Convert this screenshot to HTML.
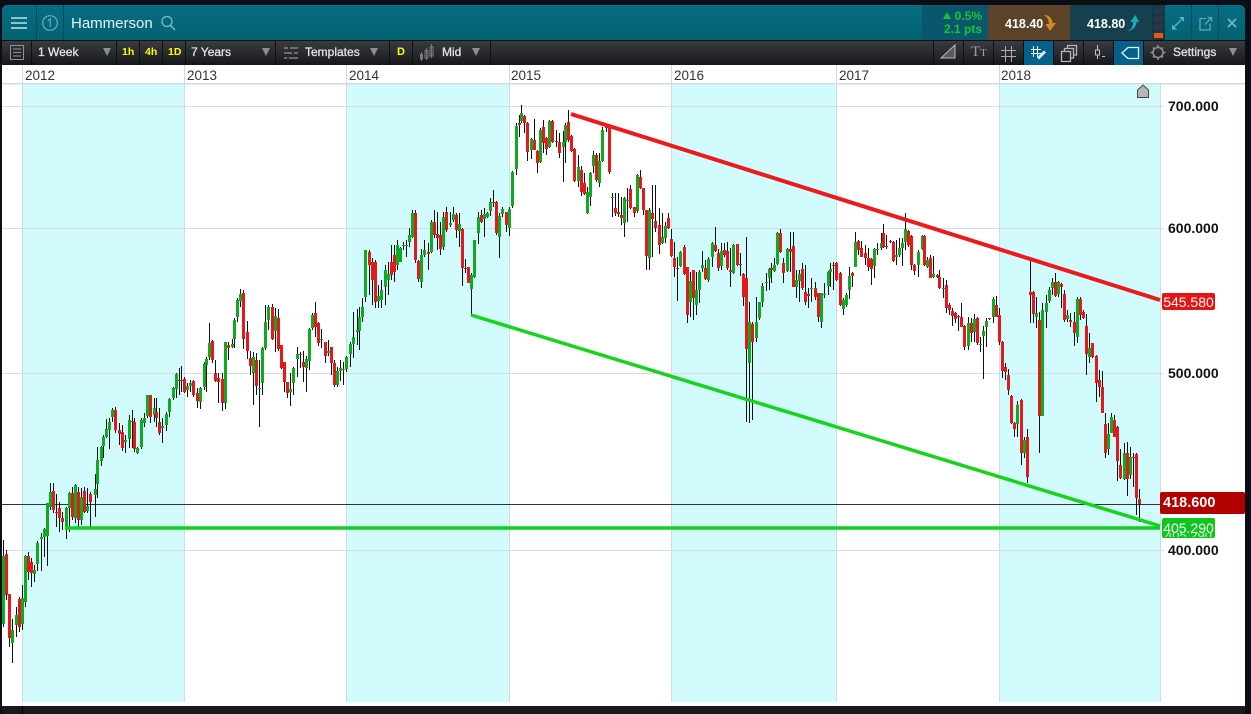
<!DOCTYPE html>
<html><head><meta charset="utf-8"><title>Hammerson</title>
<style>
html,body{margin:0;padding:0;width:1251px;height:714px;overflow:hidden;background:#0b0f15;font-family:"Liberation Sans",sans-serif}
.a{position:absolute}
#hd{left:2px;top:5px;width:1243px;height:35px;border-radius:5px 5px 0 0;background:linear-gradient(#066d85,#04626f);overflow:hidden}
#tb{left:2px;top:41px;width:1243px;height:24px;background:linear-gradient(#393c41,#16181c)}
#ch{left:2px;top:65px;width:1243px;height:641px;background:#fff}
.t{position:absolute;white-space:nowrap;color:#dfe3e6;font-size:12px;-webkit-text-stroke:.3px #dfe3e6;line-height:24px;top:39.500px}
.y{position:absolute;white-space:nowrap;color:#ff0;font-size:10.5px;font-weight:bold;line-height:24px;top:39.500px}
.s{position:absolute;top:41px;width:1px;height:24px;background:#0d0f12}
.ar{position:absolute;top:47.500px;width:0;height:0;border-left:4.5px solid transparent;border-right:4.5px solid transparent;border-top:8px solid #8b9096}
.yr{position:absolute;top:68px;font-size:13.5px;line-height:16px;color:#333;white-space:nowrap}
.p{position:absolute;left:1168px;font-size:14px;font-weight:bold;color:#111;line-height:16px;white-space:nowrap}
.tag{position:absolute;color:#fff;text-align:center;white-space:nowrap;border-radius:2px}
</style></head><body>
<div class="a" id="hd"></div>
<div class="a" style="left:922px;top:5px;width:66px;height:35px;background:#0a566c"></div>
<div class="a" style="left:988px;top:5px;width:82px;height:35px;background:#5a4329"></div>
<div class="a" style="left:1070px;top:5px;width:82px;height:35px;background:#15404e"></div>
<div class="a" style="left:1152px;top:5px;width:13px;height:35px;background:#0f3a48"></div>
<div class="a" style="left:1154px;top:8px;width:9px;height:6px;background:#2f3546"></div>
<div class="a" style="left:1154px;top:16px;width:9px;height:6px;background:#2f3546"></div>
<div class="a" style="left:1154px;top:24px;width:9px;height:6px;background:#2f3546"></div>
<div class="a" style="left:1154px;top:33px;width:9px;height:5px;background:#f0540c"></div>
<div class="a" style="left:1191px;top:5px;width:1px;height:35px;background:#04485a"></div>
<div class="a" style="left:1218px;top:5px;width:1px;height:35px;background:#04485a"></div>
<div class="a" style="left:36px;top:5px;width:1px;height:35px;background:#04485a"></div>
<div class="a" style="left:63px;top:5px;width:1px;height:35px;background:#04485a"></div>
<svg class="a" style="left:0;top:0" width="1251" height="41" fill="none">
<path d="M11 18H27M11 23H27M11 28H27" stroke="#8cc4d0" stroke-width="2"/>
<circle cx="50" cy="23" r="7.3" stroke="#5fb0c0" stroke-width="1.2"/>
<path d="M48 20.500L50.300 19V27" stroke="#5fb0c0" stroke-width="1.200"/>
<circle cx="167" cy="21.500" r="5" stroke="#7fbccb" stroke-width="1.300"/>
<path d="M170.500 25.500L175 30" stroke="#7fbccb" stroke-width="1.500"/>
<path d="M1044 15C1049 15 1052 18 1052.500 23L1056 23L1050 31L1045.500 24L1049 24C1049 20 1047 17 1044 15Z" fill="#d98a1e"/>
<path d="M1127 31C1131 30 1133 27 1133 22L1130 22L1135.500 15L1139 22L1136.500 22C1136.500 27 1132 31 1127 31Z" fill="#1ea6bd"/>
<path d="M1184 17H1179L1184 22ZM1172 29.500H1177L1172 24.500Z" fill="#5fb4c8"/>
<path d="M1181 20L1177.500 23.500M1178 23L1174.500 26.500" stroke="#5fb4c8" stroke-width="1.300"/>
<path d="M1206 18.500H1200V30H1210V23.500M1205 24.500L1211 18M1207.500 17.500H1211.500V21.500" stroke="#5fa9bb" stroke-width="1.300"/>
<path d="M1228 19L1236 27M1236 19L1228 27" stroke="#6fb5c6" stroke-width="1.800"/>
</svg>
<div class="a" style="left:71px;top:15px;font-size:15px;line-height:18px;color:#e6f3f6;white-space:nowrap">Hammerson</div>
<svg class="a" style="left:943px;top:11px" width="9" height="9"><path d="M0 8L4 1L8 8Z" fill="#10c832"/></svg>
<div class="a" style="left:936px;top:9px;width:46px;text-align:right;font-size:12px;font-weight:bold;line-height:14px;color:#10c832;white-space:nowrap">0.5%</div>
<div class="a" style="left:936px;top:23px;width:46px;text-align:right;font-size:12px;font-weight:bold;line-height:13px;color:#10c832;white-space:nowrap">2.1 pts</div>
<div class="a" style="left:1005px;top:16px;font-size:12.500px;font-weight:bold;line-height:16px;color:#fff">418.40</div>
<div class="a" style="left:1087px;top:16px;font-size:12.500px;font-weight:bold;line-height:16px;color:#fff">418.80</div>

<div class="a" id="tb"></div>
<div class="a" style="left:1024px;top:41px;width:29px;height:24px;background:#05608c"></div>
<div class="a" style="left:1114px;top:41px;width:29px;height:24px;background:#05608c"></div>
<div class="s" style="left:31px"></div><div class="s" style="left:116px"></div><div class="s" style="left:139px"></div><div class="s" style="left:162px"></div><div class="s" style="left:185px"></div><div class="s" style="left:275px"></div><div class="s" style="left:389px"></div><div class="s" style="left:412px"></div><div class="s" style="left:490px"></div><div class="s" style="left:933px"></div><div class="s" style="left:963px"></div><div class="s" style="left:993px"></div><div class="s" style="left:1023px"></div><div class="s" style="left:1053px"></div><div class="s" style="left:1083px"></div><div class="s" style="left:1113px"></div><div class="s" style="left:1143px"></div>
<svg class="a" style="left:0;top:41px" width="1251" height="24" fill="none" stroke="#8c9096" stroke-width="1">
<path d="M10.500 4.500H23.500V18.500H10.500ZM13 8H21M13 11.500H21M13 15H21"/>
<path d="M284 7H298M284 12H298M284 17H298" stroke="#80848a" stroke-width="1.500"/>
<path d="M289 5V9M293 10V14M288 15V19" stroke="#2a2c30" stroke-width="2"/>
<path d="M420.500 13.500H422.500V18H420.500ZM421.500 11V20M425 9.500H428V17H425ZM426.500 7V19M430 6H433V15H430ZM431.500 3V17" stroke="#777b80"/>
<path d="M941 17H955V4Z" stroke="#b9bcbf" fill="#55585c"/>
<path d="M1005.500 5V21M1011.500 5V21M1001 9.500H1016M1001 15.500H1016" stroke="#a8acb0"/>
<path d="M1033.500 5V16M1037.500 5V16M1031 8.500H1041M1031 12.500H1041" stroke="#eef5f8"/>
<path d="M1038 17.500L1045 10.500" stroke="#dfeaf0" stroke-width="3"/>
<path d="M1061.500 10.500H1070.500V20.500H1061.500ZM1064.500 10V7.500H1073.500V17H1071M1067.500 7V4.500H1076.500V14H1074" stroke="#b4b8bc" stroke-width="1.300"/>
<path d="M1097.500 4V9M1097.500 14V18M1095.500 9H1099.500V14H1095.500ZM1102 15.500H1105" stroke="#c0c4c8"/>
<path d="M1122 12L1128 6.500H1138.500V17.500H1128Z" stroke="#e8f2f6" stroke-width="1.300"/>
<circle cx="1158" cy="11.500" r="5" stroke="#8e8e8a" stroke-width="1.600"/>
<path d="M1158 4V6M1158 17V19M1150.500 11.500H1152.500M1163.500 11.500H1165.500M1153 6.500L1154.500 8M1161.500 15L1163 16.500M1163 6.500L1161.500 8M1154.500 15L1153 16.500" stroke="#8e8e8a" stroke-width="1.600"/>
</svg>
<div class="t" style="left:38px">1 Week</div><div class="ar" style="left:103px"></div>
<div class="y" style="left:122px">1h</div><div class="y" style="left:145px">4h</div><div class="y" style="left:168px">1D</div>
<div class="t" style="left:191px">7 Years</div><div class="ar" style="left:262px"></div>
<div class="t" style="left:305px">Templates</div><div class="ar" style="left:370px"></div>
<div class="y" style="left:397px;font-size:11px">D</div>
<div class="t" style="left:442px">Mid</div><div class="ar" style="left:472px"></div>
<div class="t" style="left:971px;top:40px;font-family:'Liberation Serif',serif;font-size:15px;color:#9a9ea2;-webkit-text-stroke:0">T<span style="font-size:11px">T</span></div>
<div class="t" style="left:1173px">Settings</div><div class="ar" style="left:1229px"></div>

<div class="a" id="ch"></div>
<div class="a" style="left:2px;top:706px;width:1243px;height:8px;background:#17191d"></div>
<div class="a" style="left:22px;top:706px;width:1px;height:8px;background:#000"></div>
<svg class="a" id="c" style="left:0;top:0" width="1251" height="714" shape-rendering="crispEdges">
<g fill="#d2fbfd"><rect x="22" y="84" width="162" height="618"/><rect x="346" y="84" width="163" height="618"/><rect x="671" y="84" width="165" height="618"/><rect x="999" y="84" width="161" height="618"/></g>
<g fill="#cfdcdf"><rect x="2" y="83" width="1243" height="1.500"/><rect x="22" y="65" width="1" height="637"/><rect x="184" y="65" width="1" height="637"/><rect x="346" y="65" width="1" height="637"/><rect x="509" y="65" width="1" height="637"/><rect x="671" y="65" width="1" height="637"/><rect x="836" y="65" width="1" height="637"/><rect x="999" y="65" width="1" height="637"/><rect x="1160" y="84" width="1" height="618"/></g>
<g fill="#d8dcdc"><rect x="2" y="106" width="1162" height="1"/><rect x="2" y="228" width="1162" height="1"/><rect x="2" y="373" width="1162" height="1"/><rect x="2" y="550" width="1162" height="1"/></g>
<rect x="2" y="504" width="1158" height="1" fill="#333"/>
<g id="cd"></g>
<g shape-rendering="auto">
<path d="M1137.500 97.500V90L1143 85L1148.500 90V97.500Z" fill="#b4b6b8" stroke="#444" stroke-width="1"/>
<path d="M65 528H1160" stroke="#10cf1e" stroke-width="3.500"/>
<path d="M471 315L1160 526" stroke="#18d21c" stroke-width="3.500"/>
<path d="M571 114L1160 300" stroke="#ec1a1a" stroke-width="4"/>
</g>
</svg>
<div class="yr" style="left:25px">2012</div><div class="yr" style="left:187px">2013</div><div class="yr" style="left:349px">2014</div><div class="yr" style="left:511px">2015</div><div class="yr" style="left:674px">2016</div><div class="yr" style="left:839px">2017</div><div class="yr" style="left:1001px">2018</div>
<div class="p" style="top:98px">700.000</div><div class="p" style="top:220px">600.000</div><div class="p" style="top:365px">500.000</div><div class="p" style="top:542px">400.000</div>
<div class="tag" style="left:1162px;top:293px;width:53px;height:17px;background:#e31414;font-size:14px;line-height:18px">545.580</div>
<div class="tag" style="left:1160px;top:492px;width:85px;height:22px;background:#b00000;font-size:14.500px;font-weight:bold;line-height:23px;text-align:left;text-indent:3px">418.600</div>
<div class="tag" style="left:1162px;top:518px;width:53px;height:20px;background:#11c51f;font-size:14px;line-height:20px">405.290</div>
<div class="a" style="left:1165px;top:533px;width:47px;height:4px;overflow:hidden;color:#c8f5cc;font-size:13px;line-height:6px;white-space:nowrap">405.290</div>
<script>
var G=[
[0,380,3,"10 480 740 528 733 g;17 510 660 522 645 r;27 643 800 643 773 r;37 718 850 750 790 g;48 680 770 705 735 g;57 650 755 657 740 r;67 615 750 655 732 g;76 525 680 528 665 g;85 515 600 528 575 r;93 535 622 545 578 r;103 555 605 570 582 g;112 483 573 488 552 g;123 460 573 472 478 g;133 445 530 447 470 g;142 368 557 370 467 g;151 310 390 335 380 g;160 310 400 333 390 r;169 342 440 395 400 r;178 365 455 385 415 r;187 395 450 415 425 r;198 380 478 385 445 g;208 335 455 338 385 g;215 320 420 340 412 r;226 312 430 315 415 g;234 320 440 335 420 r;244 325 435 350 420 g;252 322 400 333 395 r;261 325 400 378 392 g;270 335 440 342 365 r;284 282 410 328 345 g;292 200 355 240 312 g;302 198 258 202 242 g;310 165 233 170 198 g;319 118 175 148 170 g;328 115 208 127 150 g;337 85 125 90 110 g;346 82 160 90 150 r;357 130 195 150 162 r;366 135 212 155 205 r;376 165 218 180 186 g;386 105 205 120 178 g;395 90 205 122 126 r;403 115 215 127 207 r;412 200 222 205 220 g;422 115 208 120 202 g;433 100 140 115 130 g;442 45 115 45 108 g;451 45 128 45 110 r;461 55 125 85 105 g;468 55 140 97 115 r;478 85 165 125 158 r;487 115 188 138 143 g;497 95 152 102 135 g;508 55 110 57 95 g;518 22 60 25 55 g"],
[100,280,3,"227 280 355 282 328 g;236 265 345 300 303 r;244 258 335 300 304 r;252 290 340 298 335 r;262 310 352 318 330 g;271 300 335 310 318 g;279 300 352 302 345 r;291 325 385 340 362 r;301 320 388 325 365 g;311 245 330 253 320 g;319 232 335 238 255 g;328 130 240 190 230 g;336 180 248 182 240 r;345 240 305 278 303 r;354 280 368 295 305 r;366 280 392 298 368 r;376 185 388 187 368 g;385 185 240 195 205 r;395 178 205 192 200 g;403 115 205 120 177 g;412 55 125 60 110 g;421 28 80 42 62 g;429 30 208 38 177 r;440 122 238 155 212 r;449 212 285 235 258 r;460 215 375 232 280 g;468 220 345 240 318 r;478 240 440 323 326 g;487 200 345 203 310 g;496 75 210 127 205 g;505 75 150 80 120 g;515 72 180 80 178 r;526 85 215 108 152 g;534 88 212 115 208 r;543 195 268 195 265 r;552 245 335 245 305 r;561 305 355 305 338 r;571 280 378 327 337 g;580 260 345 265 310 g;590 200 290 222 237 g;600 215 265 222 225 r;609 212 305 245 262 r;619 228 335 238 265 g;628 145 270 148 242 g;637 98 150 105 145 g;646 67 170 100 140 r;654 125 198 130 190 r;664 148 205 176 179 g;674 185 250 185 228 r;685 180 228 213 218 g;692 200 285 202 248 r;702 240 320 250 315 r;712 262 322 272 315 g;721 240 302 265 272 g;730 245 315 266 270 g;739 228 275 232 267 g;751 185 262 192 222 g;760 95 235 170 192 g;770 88 195 150 155 g;778 80 210 112 152 g;787 55 125 82 110 g"],
[0,0,1,"365.3 250 302 250 297 g;368.500 250 295 252 265 r;371.600 258 305 262 280 r;374.800 260 308 262 302 r;378 285 308 296 301 g;381 280 308 290 300 g;384.700 265 305 270 287 g;388 262 295 274 280 g;391 245 280 262 275 r;394 245 282 255 272 r;397 240 270 245 265 g"],
[400,90,3,"0 470 515 475 515 g;10 455 480 465 469 g;18 450 500 465 469 g;28 415 470 435 455 g;37 360 445 368 440 g;45 360 520 370 510 r;54 510 575 512 568 r;64 478 595 495 575 g;73 450 500 480 495 g;85 460 540 487 492 r;94 390 490 395 487 g;103 360 445 395 435 r;112 365 480 432 445 r;120 395 495 435 478 r;130 365 480 380 470 g;139 350 425 365 420 r;149 365 410 400 405 g;160 350 395 373 390 g;168 370 445 375 420 r;178 370 470 402 422 g;186 415 588 418 535 r;195 508 550 533 538 r;204 530 580 530 580 r;214 550 675 555 598 g;223 450 565 450 560 g;235 365 462 380 430 g;243 360 400 375 395 r;253 355 440 372 388 g;262 365 385 370 380 g;271 325 378 337 362 g;280 300 350 335 340 r;288 333 435 335 430 r;298 370 505 377 440 g;307 350 380 357 372 g;318 365 425 365 405 r;328 350 438 358 413 g;337 243 355 245 348 g;347 100 255 107 237 g;356 75 142 98 105 r;364 45 100 70 93 g;372 75 128 78 100 r;381 95 212 98 187 r;394 145 208 148 180 g;403 88 180 150 180 r;411 180 250 182 220 r;421 115 220 120 215 g;429 90 190 112 160 r;438 140 195 143 178 r;448 90 175 92 170 g;456 90 158 92 155 r;469 120 170 152 155 r;477 130 205 155 190 r;488 122 275 155 170 g;496 100 220 105 155 g;505 60 155 95 150 r;513 135 185 137 183 r;522 175 275 178 272 r;533 195 290 230 273 g;543 228 318 240 305 r;551 250 315 280 312 r;562 292 372 305 370 g;571 245 348 248 322 g;580 182 248 195 228 g;588 190 275 195 270 r;598 190 292 213 278 g;607 110 215 120 212 g;617 105 125 110 114 r;627 115 253 115 245 r;636 310 380 320 324 g;645 308 378 355 370 r;655 310 382 367 372 r;664 320 405 375 385 r;673 322 440 325 400 g;682 295 395 330 334 g;690 285 358 298 355 r;702 350 380 352 368 r;712 252 370 255 362 g;720 240 298 260 295 r;729 295 375 295 360 r;738 360 540 360 498 r;748 355 540 360 505 g;756 285 500 370 388 r;766 285 425 392 415 r;776 355 492 405 465 r;787 368 462 440 460 g;796 395 460 408 445 g;804 368 418 385 415 r;813 418 500 448 498 r;822 455 560 503 532 r;832 500 632 533 537 r;841 482 530 485 528 g;852 465 555 470 552 r;861 530 698 532 675 r;871 545 680 572 635 g;880 540 690 540 625 r;889 545 675 600 645 g;897 540 640 545 600 g"],
[670,200,3,"97 152 215 195 203 g;105 180 240 205 238 r;115 170 245 178 240 g;127 125 200 130 172 g;136 82 155 135 152 r;144 148 212 160 205 r;154 130 210 152 198 g;161 130 170 150 165 r;171 125 210 152 205 r;181 145 260 210 215 r;190 132 222 135 218 g;200 132 198 133 195 r;210 160 228 193 196 r;219 220 318 222 290 r;228 112 665 235 448 r;238 305 668 365 488 g;247 365 660 372 425 r;257 292 425 367 415 g;266 305 360 305 355 g;277 250 320 258 305 g;287 220 272 245 250 g;296 205 270 208 235 g;304 190 250 205 210 r;313 175 215 195 212 g;322 95 195 100 192 g;330 88 158 100 155 r;339 175 250 190 220 r;352 145 215 148 212 g;360 95 215 148 155 r;368 97 262 138 260 r;379 210 293 240 262 g;388 210 305 222 242 g;396 190 270 207 265 r;405 195 315 275 305 r;414 265 325 283 287 r;424 235 305 265 268 g;434 245 300 265 290 r;444 278 365 280 350 r;454 278 385 280 365 g;463 250 295 281 285 g;473 212 285 215 258 g;481 190 260 207 215 g;489 185 270 195 198 r;498 185 242 190 240 r;510 215 318 218 315 r;520 295 345 300 328 g;529 280 320 285 315 g;538 200 298 228 270 g;546 215 260 218 228 r;556 97 200 127 200 g;564 120 165 122 150 r;574 122 172 145 170 r;584 135 195 160 175 r;594 145 212 175 200 r;603 175 255 178 208 r;613 145 235 148 198 g;622 130 165 146 150 g;632 100 150 130 145 g;640 72 145 100 142 r;649 105 148 138 142 r;660 120 130 123 127 r;669 122 185 125 182 r;679 120 195 165 170 g;688 115 172 145 165 g;697 115 198 128 145 g;706 40 150 88 125 g;713 90 140 92 135 r;723 105 210 107 195 r;732 192 225 195 212 r;745 150 230 155 195 g;755 105 150 108 148 g;762 105 198 108 195 r;772 170 205 180 200 g;780 165 235 175 233 r;790 168 235 222 232 g;800 222 235 225 232 r;807 210 268 230 265 r;820 235 295 264 268 g;828 240 340 255 325 r;836 310 345 315 330 r;846 325 378 332 348 r;855 335 370 340 358 r;864 345 392 348 352 r;873 310 382 350 380 r;883 375 450 378 440 r"],
[950,240,3,"55 232 330 250 318 g;63 235 305 250 278 r;72 222 305 238 275 g;81 232 315 235 310 r;91 290 335 312 316 g;100 258 418 272 288 g;109 235 322 242 262 g;118 235 240 235 238 r;130 170 250 177 232 g;138 168 232 195 230 r;147 205 315 225 305 r;156 303 415 305 392 r;165 368 420 382 395 r;173 388 465 405 450 r;183 466 552 468 550 r;192 545 592 548 568 r;202 482 592 495 552 g;213 478 675 480 638 r;223 590 655 600 638 g;231 567 730 590 712 r;241 60 250 155 165 r;249 152 250 155 222 r;259 170 265 220 232 g;268 215 640 240 527 r;277 190 528 210 528 g;289 165 265 190 215 g;298 140 190 150 183 g;307 115 165 125 145 g;316 100 172 125 168 r;325 122 170 125 162 g;333 130 205 133 140 r;342 150 245 162 240 r;352 210 245 225 238 g;361 220 262 240 245 r;372 215 318 245 278 r;382 172 310 177 290 g;390 170 240 177 225 r;399 210 238 215 235 r;408 222 405 258 342 r;418 280 370 325 350 g;426 308 355 310 350 r;437 345 485 348 430 r;447 390 470 420 440 r;456 393 520 440 520 r;465 518 655 552 640 r;475 550 645 582 628 g;484 520 580 532 578 g;492 525 590 540 590 r;501 558 722 560 662 r;510 628 718 675 715 r;523 610 720 640 718 g;531 605 768 640 718 r;541 620 718 650 705 g;549 640 740 650 654 r;557 640 825 642 775 r;567 748 845 778 792 r"]
];
var w='',gp='',rp='';
G.forEach(function(g){g[3].split(';').forEach(function(s){var a=s.split(' '),x=Math.round(g[0]+a[0]/g[2]),f=function(v){return Math.round(g[1]+v/g[2])},
t=f(a[1]),b=f(a[2]),T=f(a[3]),B=Math.max(f(a[4]),f(a[3])+1),d='M'+(x-1)+' '+T+'h3V'+B+'h-3Z';
w+='M'+x+' '+t+'h1V'+b+'h-1Z';if(a[5]=='g')gp+=d;else rp+=d;});});
document.getElementById('cd').innerHTML='<path d="'+w+'" fill="#111"/><path d="'+gp+'" fill="#12a922"/><path d="'+rp+'" fill="#e3191c"/>';
</script>
</body></html>
